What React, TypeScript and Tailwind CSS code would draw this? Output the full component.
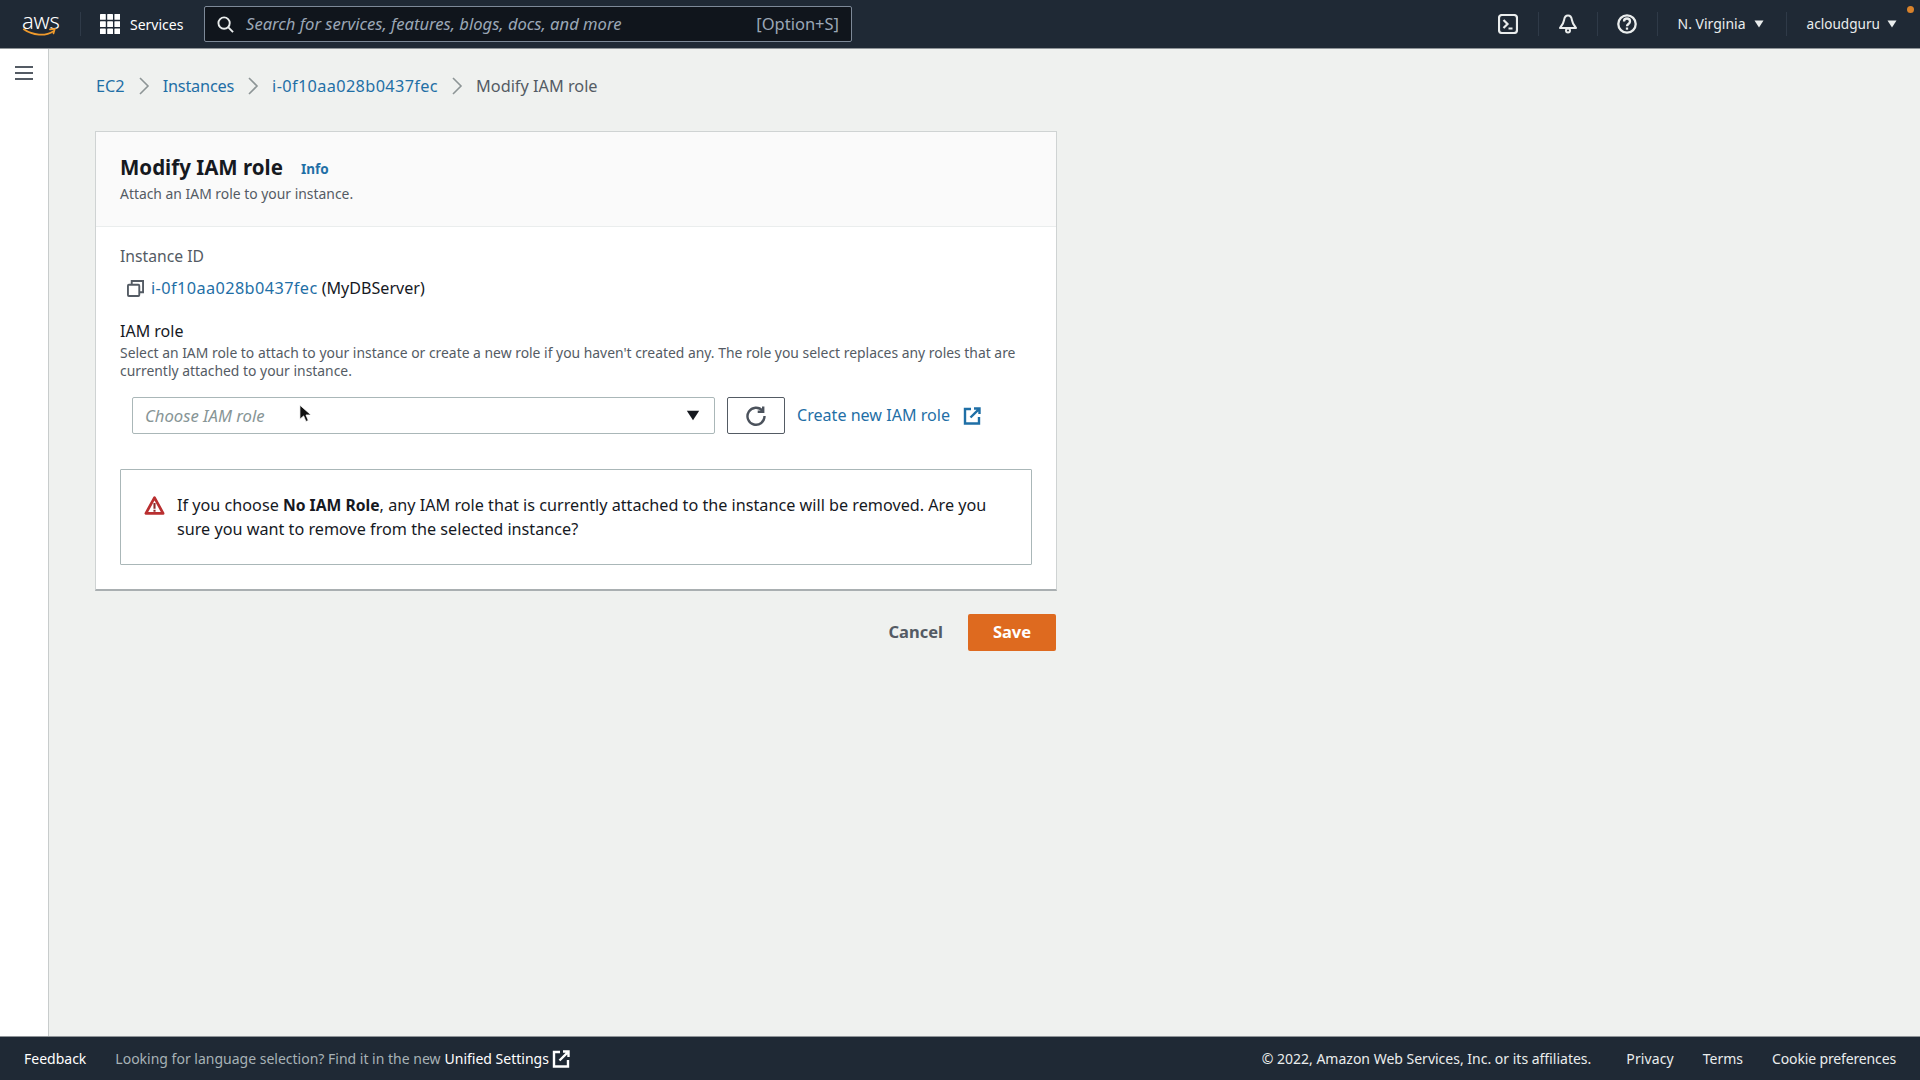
import React from "react";

const Sep = () => <div className="w-px h-[24px] bg-[#2f3a48]" />;

const Caret = ({ className = "" }: { className?: string }) => (
  <svg viewBox="0 0 10 8" className={className} fill="currentColor"><path d="M0.5 0.5h9L5 7.5z" /></svg>
);

const Chevron = () => (
  <svg viewBox="0 0 12 20" className="w-[12px] h-[20px] text-[#8d9596]" fill="none" stroke="currentColor" strokeWidth="1.6"><path d="M2 2l8 8-8 8" /></svg>
);

const External = ({ className = "" }: { className?: string }) => (
  <svg viewBox="0 0 18 18" className={className} fill="none" stroke="currentColor" strokeWidth="2.4">
    <path d="M8 2H2v14.500h14V10" />
    <path d="M11 1.500h5.500V7M16.200 1.800L7.500 10.500" />
  </svg>
);

export default function App() {
  return (
    <div className="w-[1920px] h-[1080px] overflow-hidden flex flex-col relative font-['Noto_Sans','Open_Sans',sans-serif] text-[17px] text-[#16191f]">
      <header className="h-[49px] shrink-0 bg-[#1f2935] border-b border-[#8f9498] flex items-center text-[#eaeded] relative">
        <div className="w-[80px] pl-[21px] shrink-0 flex flex-col items-start">
          <span className="text-[22px] leading-[17px] font-light text-white tracking-[-0.3px] ml-[1px]">aws</span>
          <svg viewBox="0 0 40 10" className="w-[38px] h-[9px] -mt-[1px]" fill="none">
            <path d="M2 1.500c10 7 24 8 33 2" stroke="#ef9a2c" strokeWidth="2" strokeLinecap="round" />
            <path d="M31 1.500l5.500-.5-1.500 5" stroke="#ef9a2c" strokeWidth="1.800" strokeLinecap="round" />
          </svg>
        </div>
        <Sep />
        <svg viewBox="0 0 20 20" className="ml-[19px] w-[20px] h-[20px] shrink-0" fill="#fff">
          {[0, 7.2, 14.4].flatMap((y) => [0, 7.2, 14.4].map((x) => <rect key={`${x}-${y}`} x={x} y={y} width="5.8" height="5.8" rx="0.6" />))}
        </svg>
        <span className="ml-[10px] w-[74px] text-[14px] text-white">Services</span>
        <div className="w-[648px] h-[36px] bg-[#10151c] border border-[#7d8998] rounded-[2px] flex items-center pl-[12px] pr-[12px]">
          <svg viewBox="0 0 18 18" className="w-[17px] h-[17px] shrink-0" fill="none" stroke="#eaeded" strokeWidth="2">
            <circle cx="7.500" cy="7.500" r="6" /><path d="M12 12l5 5" />
          </svg>
          <span className="ml-[12px] italic text-[16.600px] text-[#9ba7b6] flex-1">Search for services, features, blogs, docs, and more</span>
          <span className="text-[16.500px] text-[#9ba7b6]">[Option+S]</span>
        </div>
        <div className="flex-1" />
        <div className="flex items-center shrink-0">
          <svg viewBox="0 0 20 20" className="w-[20px] h-[20px] mr-[20px]" fill="none" stroke="#eaeded" strokeWidth="2.200">
            <rect x="1" y="1" width="18" height="18" rx="3" /><path d="M5.500 6l4 4-4 4M10.500 14.500h4" />
          </svg>
          <Sep />
          <svg viewBox="0 0 20 20" className="w-[20px] h-[20px] mx-[19px]" fill="none" stroke="#eaeded" strokeWidth="2">
            <path d="M10 1.500c-2.800 0-3.600 2.200-3.900 4.500-.4 3-1.600 5-4.100 8h16c-2.500-3-3.700-5-4.100-8-.3-2.300-1.100-4.500-3.900-4.500z" strokeLinejoin="round" /><circle cx="10" cy="16.500" r="2" />
          </svg>
          <Sep />
          <svg viewBox="0 0 20 20" className="w-[20px] h-[20px] ml-[19px] mr-[20px]" fill="none" stroke="#eaeded" strokeWidth="2.300">
            <circle cx="10" cy="10" r="8.700" /><path d="M7 7.500c0-4 6-4 6 0 0 2.500-3 2.500-3 4.800" /><path d="M10 13.500v2.200" />
          </svg>
          <Sep />
          <span className="ml-[20px] text-[14px] leading-none">N. Virginia</span>
          <Caret className="w-[10px] h-[8px] ml-[8px] mr-[22px] text-[#eaeded]" />
          <Sep />
          <span className="ml-[20px] text-[13.600px] leading-none">acloudguru</span>
          <Caret className="w-[10px] h-[8px] ml-[7px] mr-[23px] text-[#eaeded]" />
        </div>
        <div className="absolute top-[6px] right-[6px] w-[7px] h-[7px] rounded-full bg-[#d9822b]" />
      </header>

      <div className="flex-1 flex min-h-0">
        <aside className="w-[49px] shrink-0 bg-white border-r border-[#c8cccc] pt-[16px] flex justify-center">
          <svg viewBox="0 0 18 16" className="w-[18px] h-[16px]" fill="none" stroke="#545b64" strokeWidth="2">
            <path d="M0 2h18M0 8h18M0 14h18" />
          </svg>
        </aside>
        <main className="flex-1 bg-[#eff1ef] pl-[47px]">
          <nav className="h-[82px] pb-[8px] flex items-center text-[16.300px]">
            <a className="text-[#1f6fa6]">EC2</a>
            <span className="mx-[13px]"><Chevron /></span>
            <a className="text-[#1f6fa6] tracking-[-0.2px]">Instances</a>
            <span className="mx-[13px]"><Chevron /></span>
            <a className="text-[#1f6fa6] tracking-[0.36px]">i-0f10aa028b0437fec</a>
            <span className="mx-[13px]"><Chevron /></span>
            <span className="text-[#545b64]">Modify IAM role</span>
          </nav>

          <section className="-ml-px w-[962px] h-[460px] bg-white border border-[#cfd3d3] border-b-[2px] border-b-[#a9afb1] flex flex-col">
            <div className="h-[95px] shrink-0 bg-[#fafafa] border-b border-[#eaeded] pl-[24px] pt-[21px]">
              <div className="flex items-center h-[28px]">
                <h1 className="text-[20.500px] font-bold leading-none">Modify IAM role</h1>
                <span className="ml-[18px] mt-[4px] text-[13.500px] font-bold text-[#1f6fa6]">Info</span>
              </div>
              <p className="text-[13.900px] text-[#545b64] leading-[20px] mt-[3px]">Attach an IAM role to your instance.</p>
            </div>
            <div className="flex-1 pl-[24px] pr-[24px]">
              <div className="mt-[19px] h-[21px] leading-[21px] text-[15.700px] text-[#545b64]">Instance ID</div>
              <div className="mt-[9px] flex items-center h-[24px] pl-[7px]">
                <svg viewBox="0 0 18 18" className="w-[17px] h-[17px] shrink-0" fill="none" stroke="#545b64" strokeWidth="2">
                  <rect x="1" y="5" width="12" height="12" rx="1" /><path d="M5 4.500V1h12v12h-3.500" />
                </svg>
                <a className="ml-[7px] text-[#1f6fa6] text-[16.300px] tracking-[0.4px]">i-0f10aa028b0437fec</a>
                <span className="ml-[4px] text-[16.100px]">(MyDBServer)</span>
              </div>
              <div className="mt-[21px] h-[21px] leading-[21px] text-[16px]">IAM role</div>
              <p className="mt-[2px] text-[13.900px] leading-[18px] text-[#545b64]">
                Select an IAM role to attach to your instance or create a new role if you haven't created any. The role you select replaces any roles that are currently attached to your instance.
              </p>
              <div className="mt-[17px] ml-[12px] flex items-center">
                <div className="w-[583px] h-[37px] bg-white border border-[#aab7b8] rounded-[2px] flex items-center pl-[12px] pr-[14px]">
                  <span className="flex-1 italic text-[16.700px] text-[#879596]">Choose IAM role</span>
                  <Caret className="w-[14px] h-[11px] text-[#16191f]" />
                </div>
                <div className="ml-[12px] w-[58px] h-[37px] border border-[#545b64] rounded-[2px] flex items-center justify-center">
                  <svg viewBox="0 0 22 22" className="w-[22px] h-[22px]" fill="none" stroke="#4b525c" strokeWidth="2.400">
                    <path d="M17.500 5.800A8.500 8.500 0 1 0 19.500 11" /><path d="M18.200 1.500V6.800h-5.500" />
                  </svg>
                </div>
                <a className="ml-[12px] text-[#1f6fa6] text-[16.100px]">Create new IAM role</a>
                <External className="ml-[13px] w-[18px] h-[18px] text-[#1f6fa6]" />
              </div>
              <div className="mt-[35px] h-[96px] border border-[#aab7b8] rounded-[1px] flex pl-[23px] pr-[24px] pt-[23px]">
                <svg viewBox="0 0 20 20" className="w-[21px] h-[21px] shrink-0 mt-[2px]" fill="none" stroke="#b92f30" strokeWidth="2.600">
                  <path d="M10 2.500L1.800 17.500h16.400z" strokeLinejoin="round" /><path d="M10 7.500v5.500M10 14v2" stroke="#8a2a2a" strokeWidth="2" />
                </svg>
                <p className="ml-[12px] text-[16.200px] leading-[24px]">
                  If you choose <b className="text-[15.700px]">No IAM Role</b>, any IAM role that is currently attached to the instance will be removed. Are you sure you want to remove from the selected instance?
                </p>
              </div>
            </div>
          </section>

          <div className="w-[960px] mt-[23px] flex items-center justify-end">
            <span className="text-[16.500px] font-bold text-[#545b64]">Cancel</span>
            <button className="ml-[25px] w-[88px] h-[37px] bg-[#de6a1f] text-white rounded-[2px] text-[16.500px] font-bold">Save</button>
          </div>
        </main>
      </div>

      <footer className="h-[44px] shrink-0 bg-[#1f2935] border-t border-[#8f9498] flex items-center pl-[24px] pr-[24px] text-[14px] text-[#eaeded]">
        <span className="text-white">Feedback</span>
        <span className="ml-[29px] text-[#a7b2b6]">Looking for language selection? Find it in the new</span>
        <span className="ml-[4px] text-white">Unified Settings</span>
        <External className="ml-[3px] w-[18px] h-[18px] text-white" />
        <div className="flex-1" />
        <span>© 2022, Amazon Web Services, Inc. or its affiliates.</span>
        <span className="ml-[35px] tracking-[0.1px]">Privacy</span>
        <span className="ml-[29px]">Terms</span>
        <span className="ml-[29px] tracking-[-0.14px]">Cookie preferences</span>
      </footer>

      <svg viewBox="0 0 14 22" className="absolute left-[299px] top-[404px] w-[13px] h-[21px]" fill="#111" stroke="#fff" strokeWidth="0.8">
        <path d="M1 1v15l4-3.500 2.500 6 2.500-1-2.500-6H13z" />
      </svg>
    </div>
  );
}
